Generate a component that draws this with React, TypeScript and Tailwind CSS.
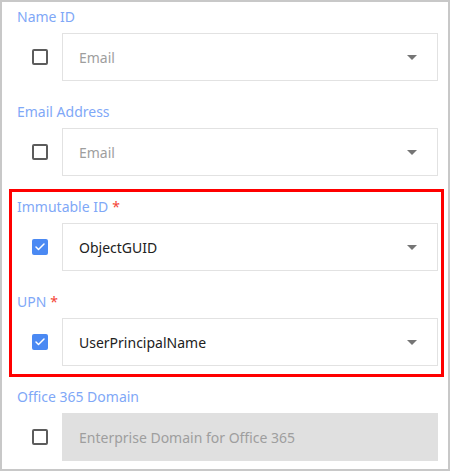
import { Check } from 'lucide-react'

interface Field {
  label: string
  value: string
  required?: boolean
  checked?: boolean
  disabled?: boolean
}

const font = { fontFamily: '"Noto Sans", "Open Sans", sans-serif' }

function Checkbox({ checked }: { checked?: boolean }) {
  if (checked) {
    return (
      <div className="w-4 h-4 rounded-[2px] bg-[#4a89f3] flex items-center justify-center flex-shrink-0">
        <Check className="w-3 h-3 text-white" strokeWidth={3} />
      </div>
    )
  }
  return <div className="w-4 h-4 rounded-[2px] border-2 border-[#5c5c5c] bg-white flex-shrink-0" />
}

function FieldRow({ field }: { field: Field }) {
  return (
    <div className="flex flex-col">
      <div className="pl-[15px] h-5 leading-5 text-[14px] text-[#7fa8f7] mb-[6px]">
        {field.label}
        {field.required && <span className="text-[#f44336] ml-1">*</span>}
      </div>
      <div className="flex items-center">
        <div className="pl-[30px] pr-[14px]">
          <Checkbox checked={field.checked} />
        </div>
        {field.disabled ? (
          <div className="flex-1 mr-[10px] h-12 bg-[#e0e0e0] flex items-center pl-[17px] text-[14px] text-[#9e9e9e]">
            {field.value}
          </div>
        ) : (
          <div className="flex-1 mr-[10px] h-12 border border-[#e2e2e2] flex items-center justify-between pl-[16px] pr-[20px]">
            <span className={`text-[14px] ${field.checked ? 'text-[#212121]' : 'text-[#9e9e9e]'}`}>
              {field.value}
            </span>
            <svg width="10" height="5" viewBox="0 0 10 5">
              <path d="M0 0h10L5 5z" fill="#757575" />
            </svg>
          </div>
        )}
      </div>
    </div>
  )
}

const fields: Field[] = [
  { label: 'Name ID', value: 'Email' },
  { label: 'Email Address', value: 'Email' },
  { label: 'Immutable ID', value: 'ObjectGUID', required: true, checked: true },
  { label: 'UPN', value: 'UserPrincipalName', required: true, checked: true },
  { label: 'Office 365 Domain', value: 'Enterprise Domain for Office 365', disabled: true },
]

export default function App() {
  return (
    <div style={font} className="w-[450px] h-[471px] bg-white border-2 border-[#c8c8c8] pt-[5px] pb-[8px] flex flex-col gap-[21px]">
      <FieldRow field={fields[0]} />
      <FieldRow field={fields[1]} />

      {/* required pair, outlined */}
      <div className="relative flex flex-col gap-[21px]">
        <div className="absolute left-[7px] right-[4px] -top-[8px] -bottom-[11px] border-[3px] border-[#ff0000] pointer-events-none" />
        <FieldRow field={fields[2]} />
        <FieldRow field={fields[3]} />
      </div>

      <FieldRow field={fields[4]} />
    </div>
  )
}
